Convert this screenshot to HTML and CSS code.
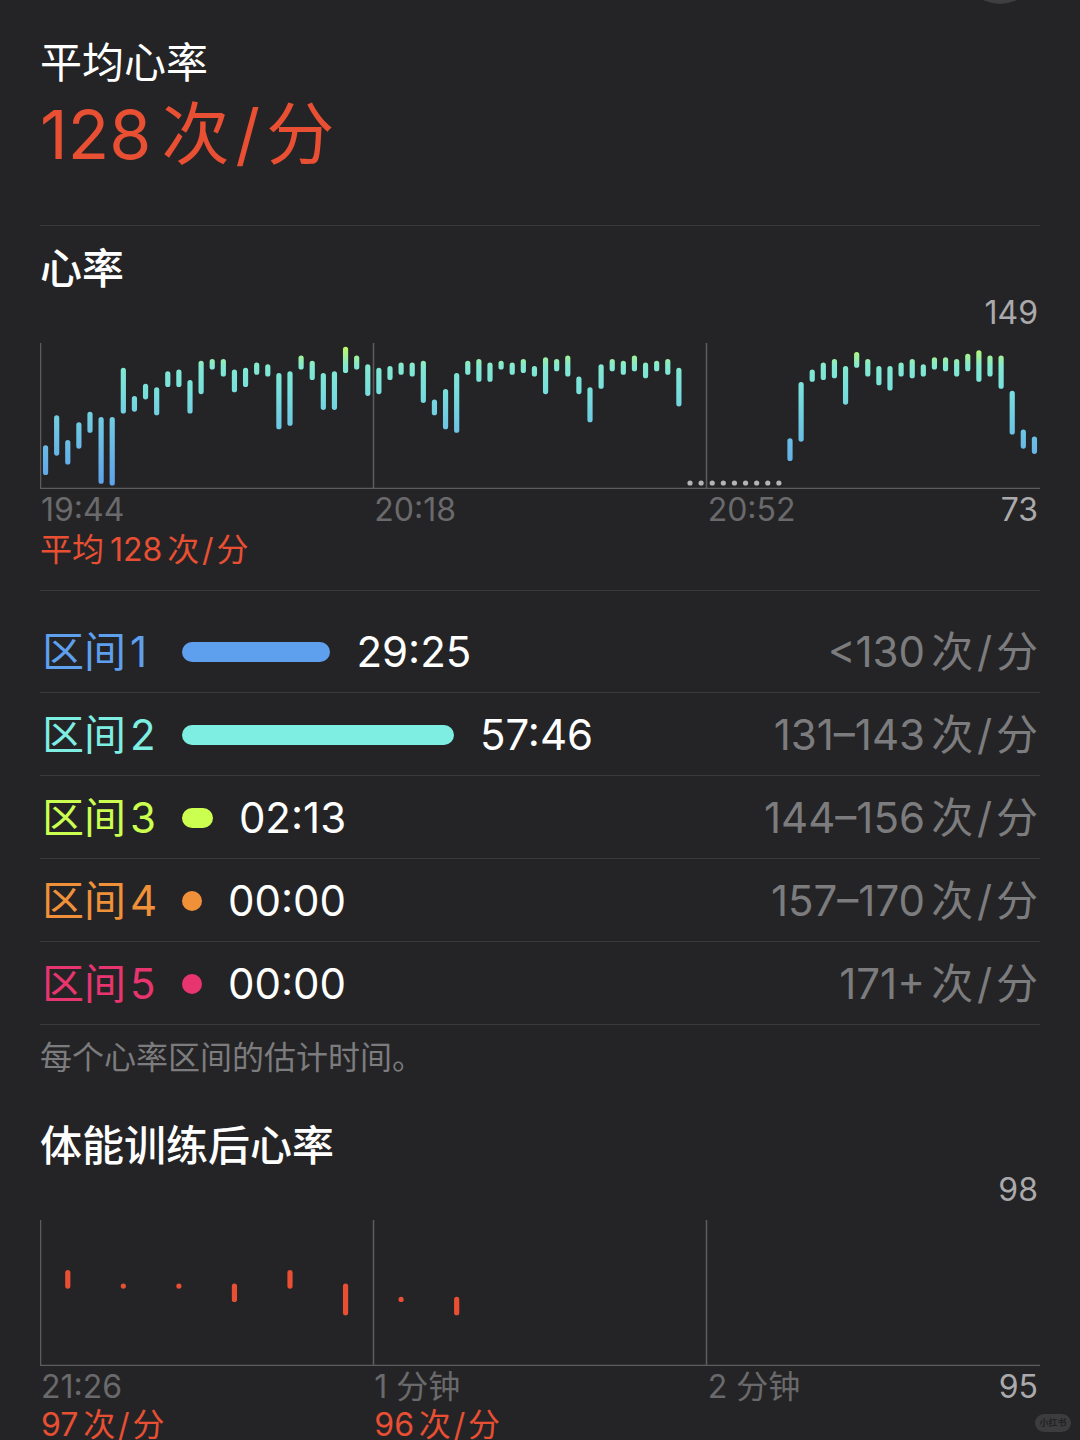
FILE: index.html
```html
<!DOCTYPE html>
<html lang="zh-CN">
<head>
  <meta charset="UTF-8">
  <meta name="viewport" content="width=device-width, initial-scale=1">
  <title>心率</title>
  <link rel="stylesheet" href="styles.css">
</head>
<body>
  <button class="close-button" type="button" aria-label="关闭"></button>
  <main class="page">
    <!-- Average -->
    <header class="summary">
      <h1 class="summary-title">平均心率</h1>
      <div class="summary-value">128<span class="unit">次<span class="slash">/</span>分</span></div>
    </header>

    <!-- Heart rate chart -->
    <section class="heart-rate">
      <h2 class="section-title">心率</h2>
      <div class="chart-max">149</div>
      <svg id="workoutChart" class="chart" viewBox="0 0 1000 146" role="img" aria-label="心率">
        <defs>
          <linearGradient id="rateGradient" gradientUnits="userSpaceOnUse" x1="0" y1="0" x2="0" y2="146">
            <stop offset="0.02" stop-color="#c0f860"/>
            <stop offset="0.08" stop-color="#a6f291"/>
            <stop offset="0.16" stop-color="#82e9d2"/>
            <stop offset="0.32" stop-color="#78e0dc"/>
            <stop offset="0.6" stop-color="#6dc4e4"/>
            <stop offset="1" stop-color="#5e9feb"/>
          </linearGradient>
        </defs>
        <path class="axis" d="M0.5 0V145.5H1000M333.5 0V145M666.5 0V145"/>
      </svg>
      <div class="chart-labels">
        <span>19:44</span>
        <span>20:18</span>
        <span class="last-label">20:52 <span class="chart-min">73</span></span>
      </div>
      <div class="average">平均<span class="average-value">128<span class="unit">次<span class="slash">/</span>分</span></span></div>
    </section>

    <!-- Zones -->
    <ul class="zones">
      <li class="zone zone-1">
        <span class="zone-name">区间<span class="zone-number">1</span></span>
        <span class="zone-bar" style="width: 14.9%"></span>
        <span class="zone-time">29:25</span>
        <span class="zone-range">&lt;130<span class="unit">次<span class="slash">/</span>分</span></span>
      </li>
      <li class="zone zone-2">
        <span class="zone-name">区间<span class="zone-number">2</span></span>
        <span class="zone-bar" style="width: 27.3%"></span>
        <span class="zone-time">57:46</span>
        <span class="zone-range">131–143<span class="unit">次<span class="slash">/</span>分</span></span>
      </li>
      <li class="zone zone-3">
        <span class="zone-name">区间<span class="zone-number">3</span></span>
        <span class="zone-bar" style="width: 3.1%"></span>
        <span class="zone-time">02:13</span>
        <span class="zone-range">144–156<span class="unit">次<span class="slash">/</span>分</span></span>
      </li>
      <li class="zone zone-4">
        <span class="zone-name">区间<span class="zone-number">4</span></span>
        <span class="zone-bar" style="width: 0%"></span>
        <span class="zone-time">00:00</span>
        <span class="zone-range">157–170<span class="unit">次<span class="slash">/</span>分</span></span>
      </li>
      <li class="zone zone-5">
        <span class="zone-name">区间<span class="zone-number">5</span></span>
        <span class="zone-bar" style="width: 0%"></span>
        <span class="zone-time">00:00</span>
        <span class="zone-range">171+<span class="unit">次<span class="slash">/</span>分</span></span>
      </li>
    </ul>
    <p class="note">每个心率区间的估计时间。</p>

    <!-- Recovery chart -->
    <section class="recovery">
      <h2 class="section-title">体能训练后心率</h2>
      <div class="chart-max">98</div>
      <svg id="recoveryChart" class="chart" viewBox="0 0 1000 146" role="img" aria-label="体能训练后心率">
        <path class="axis" d="M0.5 0V145.5H1000M333.5 0V145M666.5 0V145"/>
      </svg>
      <div class="chart-labels">
        <span>21:26</span>
        <span>1 分钟</span>
        <span class="last-label">2 分钟 <span class="chart-min">95</span></span>
      </div>
      <div class="chart-labels chart-values">
        <span>97<span class="unit">次<span class="slash">/</span>分</span></span>
        <span>96<span class="unit">次<span class="slash">/</span>分</span></span>
      </div>
    </section>
  </main>
  <div class="watermark">小红书</div>
  <script src="script.js"></script>
</body>
</html>
```

FILE: styles.css
```css
* {
  box-sizing: border-box;
  margin: 0;
  padding: 0;
}
body {
  background-color: #242426;
  color: #ffffff;
  font-family: Inter, "Noto Sans CJK SC", sans-serif;
  overflow: hidden;
}
.page {
  height: 100vh;
  padding: 33px 40px 0;
  overflow-y: auto;
  scrollbar-width: none;
}
.close-button {
  position: absolute;
  top: -72px;
  right: 42px;
  width: 76px;
  height: 76px;
  border: none;
  border-radius: 50%;
  background-color: #3e3e40;
}

/* Units */
.unit {
  margin-left: 0.15em;
}
.slash {
  margin: 0 0.09em;
}

/* Summary */
.summary {
  padding-bottom: 50px;
  border-bottom: 1px solid #3a3a3c;
}
.summary-title {
  font-size: 42px;
  font-weight: 400;
  line-height: 60px;
}
.summary-value {
  color: #e84f33;
  font-size: 68px;
  line-height: 82px;
}

/* Charts */
.heart-rate {
  padding: 17px 0 20px;
  border-bottom: 1px solid #3a3a3c;
}
.section-title {
  font-size: 42px;
  font-weight: 500;
  line-height: 52px;
}
.chart-max {
  margin-bottom: 12px;
  padding-right: 2px;
  color: #aaaaac;
  font-size: 32px;
  line-height: 36px;
  text-align: right;
}
.chart {
  display: block;
  width: 100%;
  height: auto;
  margin-bottom: 1px;
}
.axis {
  fill: none;
  stroke: #5c5c5e;
  stroke-width: 1.5;
}
.bars {
  fill: none;
  stroke-width: 5.2;
  stroke-linecap: round;
}
.bars-zones {
  stroke: url(#rateGradient);
}
.bars-red {
  stroke: #e84f33;
}
.bars-gap {
  stroke: #b4b4b6;
}
.chart-labels {
  display: grid;
  grid-template-columns: repeat(3, 1fr);
  color: #6a6a6c;
  font-size: 32px;
  line-height: 40px;
}
.chart-labels > span {
  padding: 0 2px 0 1px;
}
.chart-labels > .last-label {
  display: flex;
  justify-content: space-between;
}
.chart-min {
  color: #aaaaac;
}
.chart-values {
  color: #e84f33;
  line-height: 36px;
}
.average {
  color: #e84f33;
  font-size: 32px;
  line-height: 40px;
}
.average-value {
  margin-left: 6px;
}

/* Zones */
.zones {
  padding-top: 19px;
  list-style: none;
}
.zone {
  display: flex;
  align-items: center;
  padding: 2px 2px 0;
  border-bottom: 1px solid #3a3a3c;
  font-size: 42px;
  line-height: 80px;
}
.zone-name {
  flex: none;
  width: 140px;
}
.zone-number {
  margin-left: 4px;
}
.zone-bar {
  flex: none;
  min-width: 20px;
  height: 20px;
  margin-right: 26px;
  border-radius: 10px;
}
.zone-range {
  margin-left: auto;
  color: #7c7c7e;
}
.zone-1 .zone-name {
  color: #5ea0ee;
}
.zone-1 .zone-bar {
  background-color: #5ea0ee;
}
.zone-2 .zone-name {
  color: #7eeee2;
}
.zone-2 .zone-bar {
  background-color: #7eeee2;
}
.zone-3 .zone-name {
  color: #cbff50;
}
.zone-3 .zone-bar {
  background-color: #cbff50;
}
.zone-4 .zone-name {
  color: #f0913a;
}
.zone-4 .zone-bar {
  background-color: #f0913a;
}
.zone-5 .zone-name {
  color: #e8356f;
}
.zone-5 .zone-bar {
  background-color: #e8356f;
}
.note {
  padding-top: 13px;
  color: #7c7c7e;
  font-size: 32px;
  line-height: 40px;
}
.recovery {
  padding-top: 42px;
}

.watermark {
  position: fixed;
  right: 9px;
  bottom: 8px;
  width: 36px;
  border-radius: 9px;
  background-color: #3c3c3e;
  color: #222224;
  font-size: 9px;
  font-weight: 700;
  line-height: 18px;
  text-align: center;
}
```

FILE: script.js
```js
// [highest, lowest] beats per minute in each slot, null where nothing was recorded
const workoutRates = [
  [93, 79], [110, 90], [96, 85], [106, 94], [112, 103], [109, 74], [109, 73], [137, 114], [121, 115], [128, 122],
  [126, 113], [135, 129], [136, 129], [130, 114], [141, 125], [142, 139], [142, 135], [136, 126], [137, 129], [140, 136],
  [139, 135], [134, 105], [135, 107], [144, 139], [141, 133], [134, 116], [135, 116], [149, 137], [144, 139], [139, 124],
  [137, 125], [138, 133], [140, 136], [140, 135], [141, 120], [119, 113], [125, 105], [134, 103], [141, 136], [142, 132],
  [140, 132], [141, 139], [140, 136], [142, 137], [138, 135], [143, 125], [142, 138], [144, 135], [132, 125], [126, 109],
  [139, 128], [142, 138], [141, 136], [144, 138], [140, 134], [141, 138], [142, 136], [137, 118], null, null,
  null, null, null, null, null, null, null, [97, 87], [129, 98], [136, 132],
  [140, 133], [142, 134], [138, 119], [146, 140], [142, 135], [138, 130], [138, 127], [140, 135], [142, 134], [139, 135],
  [143, 139], [143, 138], [142, 135], [145, 138], [147, 132], [144, 135], [144, 128], [124, 102], [102, 94], [98, 91]
];

const recoveryRates = [
  [96.96, 96.66], [96.66, 96.66], [96.66, 96.66], [96.66, 96.36],
  [96.96, 96.66], [96.66, 96.06], [96.36, 96.36], [96.36, 96.06]
];

const chartWidth = 1000;
const chartTop = 6.3;
const chartBottom = 140;

function addPath(chart, d, className) {
  const path = document.createElementNS('http://www.w3.org/2000/svg', 'path');
  path.setAttribute('d', d);
  path.setAttribute('class', `bars ${className}`);
  chart.appendChild(path);
}

function drawChart(id, rates, slots, max, min, className) {
  const chart = document.getElementById(id);
  const toY = rate => chartTop + (max - rate) / (max - min) * (chartBottom - chartTop);
  let bars = '';
  let gaps = '';
  rates.forEach((rate, i) => {
    const x = ((i + 0.5) * chartWidth / slots).toFixed(2);
    if (rate) {
      bars += `M${x} ${toY(rate[0]).toFixed(2)}V${(toY(rate[1]) + 0.01).toFixed(2)}`;
    } else {
      gaps += `M${x} ${chartBottom}h0.01`;
    }
  });
  addPath(chart, bars, className);
  if (gaps) {
    addPath(chart, gaps, 'bars-gap');
  }
}

drawChart('workoutChart', workoutRates, 90, 149, 73, 'bars-zones');
drawChart('recoveryChart', recoveryRates, 18, 98, 95, 'bars-red');
```
